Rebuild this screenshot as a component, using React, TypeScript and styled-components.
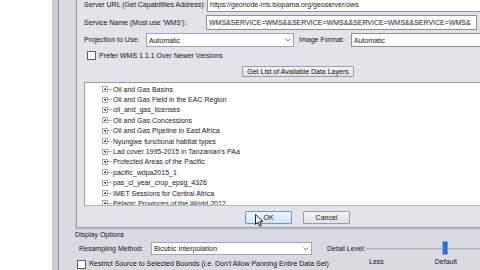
import React from "react";
import styled, { createGlobalStyle } from "styled-components";

const Global = createGlobalStyle`
  html, body { margin: 0; padding: 0; background: #ffffff; }
  body { font-family: "Liberation Sans", Arial, sans-serif; font-size: 7px; color: #151515; }
  * { box-sizing: border-box; }
`;

const Screen = styled.div`
  width: 480px;
  height: 270px;
  overflow: hidden;
  display: flex;
  background: #ffffff;
`;

const SidePane = styled.div`
  width: 53px;
  flex: none;
  background: #ffffff;
  border-right: 1px solid #cfcfd4;
`;

const WindowEdge = styled.div`
  width: 6px;
  flex: none;
  background: #cdcdd6;
  border-right: 1px solid #8c8c98;
`;

const OuterDialog = styled.div`
  flex: none;
  width: 440px;
  display: flex;
  flex-direction: column;
  background: #dadae2;
`;

const WmsWindow = styled.div`
  margin-top: -4px;
  margin-left: 17px;
  width: 420px;
  height: 232px;
  flex: none;
  display: flex;
  flex-direction: column;
  padding: 1px 0 3px 7px;
  background: #e3e3ea;
  border-left: 1px solid #9a9aa6;
  border-bottom: 1px solid #9a9aa6;
  box-shadow: 0 1px 2px rgba(60, 60, 80, 0.25);
`;

const Row = styled.div<{ $h: number; $mt?: number }>`
  display: flex;
  align-items: center;
  height: ${(p) => p.$h}px;
  margin-top: ${(p) => p.$mt ?? 0}px;
  flex: none;
`;

const Label = styled.span<{ $w?: number; $ml?: number }>`
  flex: none;
  white-space: nowrap;
  ${(p) => (p.$w ? `width: ${p.$w}px;` : "")}
  margin-left: ${(p) => p.$ml ?? 0}px;
  line-height: 8px;
`;

const TextBox = styled.div<{ $w?: number; $mr?: number }>`
  height: 100%;
  ${(p) => (p.$w ? `width: ${p.$w}px; flex: none;` : "flex: 1;")}
  margin-right: ${(p) => p.$mr ?? 0}px;
  background: #ffffff;
  border: 1px solid #8f8f98;
  padding: 0 2px;
  display: flex;
  align-items: center;
  white-space: nowrap;
  overflow: hidden;
  color: #1a1a1a;
`;

const Combo = styled.div<{ $w: number }>`
  width: ${(p) => p.$w}px;
  flex: none;
  height: 100%;
  background: #ffffff;
  border: 1px solid #a4a4ae;
  display: flex;
  align-items: center;
  padding-left: 2px;
  white-space: nowrap;
`;

const ComboText = styled.span`
  flex: 1;
`;

const ComboArrow = styled.span`
  width: 11px;
  height: 100%;
  display: flex;
  align-items: center;
  justify-content: center;
`;

const CheckBox = styled.span<{ $ml?: number }>`
  width: 9px;
  height: 9px;
  flex: none;
  margin-left: ${(p) => p.$ml ?? 0}px;
  margin-right: 3px;
  background: #ffffff;
  border: 1px solid #5c5c66;
`;

const Button = styled.div<{ $w: number; $ml?: number; $primary?: boolean }>`
  position: relative;
  width: ${(p) => p.$w}px;
  height: 100%;
  flex: none;
  margin-left: ${(p) => p.$ml ?? 0}px;
  display: flex;
  align-items: center;
  justify-content: center;
  white-space: nowrap;
  border: 1px solid ${(p) => (p.$primary ? "#6f94c8" : "#9c9ca6")};
  border-radius: 1px;
  background: ${(p) =>
    p.$primary
      ? "linear-gradient(#eef4fc, #d6e5f7)"
      : "linear-gradient(#f4f4f6, #e0e0e6)"};
`;

const TreeList = styled.div`
  height: 124px;
  flex: none;
  margin-top: 5px;
  background: #ffffff;
  border-top: 1px solid #9a9aa4;
  border-left: 1px solid #9a9aa4;
  border-bottom: 1px solid #b4b4bc;
  padding-top: 1px;
  overflow: hidden;
  position: relative;
`;

const TreeItem = styled.div`
  height: 10.4px;
  display: flex;
  align-items: center;
  padding-left: 17px;
  white-space: nowrap;
  color: #1a1a1a;
`;

const Expander = styled.span`
  width: 6px;
  height: 6px;
  flex: none;
  border: 1px solid #a9a9b0;
  background: #ffffff;
  position: relative;
  &::before {
    content: "";
    position: absolute;
    left: 1px;
    top: 1.5px;
    width: 2px;
    height: 1px;
    background: #333;
  }
  &::after {
    content: "";
    position: absolute;
    left: 1.5px;
    top: 1px;
    width: 1px;
    height: 2px;
    background: #333;
  }
`;

const Connector = styled.span`
  width: 4px;
  flex: none;
  margin: 0 1px 0 0;
  border-top: 1px dotted #9a9aa0;
`;

const Footer = styled(Row)`
  margin-top: 5px;
`;

const DisplaySection = styled.div`
  display: flex;
  flex-direction: column;
  padding-left: 16px;
`;

const SectionTitle = styled.div`
  margin-top: 3px;
  height: 8px;
  line-height: 8px;
  white-space: nowrap;
`;

const DisplayBody = styled.div`
  display: flex;
  margin-top: 3px;
`;

const LeftColumn = styled.div`
  width: 252px;
  flex: none;
  display: flex;
  flex-direction: column;
`;

const DetailColumn = styled.div`
  display: flex;
  align-items: flex-start;
`;

const DetailLabel = styled.span`
  height: 13px;
  display: flex;
  align-items: center;
  white-space: nowrap;
  width: 39px;
  flex: none;
`;

const SliderBlock = styled.div`
  width: 120px;
  flex: none;
  display: flex;
  flex-direction: column;
`;

const SliderTrackRow = styled.div`
  height: 15px;
  margin-top: -1px;
  position: relative;
  display: flex;
  align-items: center;
`;

const Track = styled.div`
  flex: 1;
  height: 2px;
  background: #c8c8d0;
  border-top: 1px solid #b0b0b8;
`;

const Thumb = styled.div`
  position: absolute;
  left: 76px;
  top: 0;
  width: 6px;
  height: 14px;
  border-radius: 1px;
  background: linear-gradient(90deg, #3d7fd4, #1f5fbf);
  border: 1px solid #6fa2e0;
`;

const TickLabels = styled.div`
  display: flex;
  height: 10px;
  align-items: center;
  padding-left: 3px;
`;

const Tick = styled.span<{ $ml?: number }>`
  margin-left: ${(p) => p.$ml ?? 0}px;
  white-space: nowrap;
`;

const Cursor = styled.svg`
  position: absolute;
  left: 9px;
  top: 2px;
`;

const Chevron = () => (
  <svg width="6" height="4" viewBox="0 0 6 4">
    <path d="M0.5 0.5 L3 3 L5.5 0.5" fill="none" stroke="#7a7a84" strokeWidth="1" />
  </svg>
);

const layers = [
  "Oil and Gas Basins",
  "Oil and Gas Field in the EAC Region",
  "oil_and_gas_licenses",
  "Oil and Gas Concessions",
  "Oil and Gas Pipeline in East Africa",
  "Nyungwe functional habitat types",
  "Lad cover 1995-2015 in Tanzanian's PAa",
  "Protected Areas of the Pacific",
  "pacific_wdpa2015_1",
  "pas_ci_year_crop_epsg_4326",
  "IMET Sessions for Central Africa",
  "Pelagic Provinces of the World 2012",
];

export default function App() {
  return (
    <>
      <Global />
      <Screen>
        <SidePane />
        <WindowEdge />
        <OuterDialog>
          <WmsWindow>
            <Row $h={15}>
              <Label $w={123}>Server URL (Get Capabilities Address):</Label>
              <TextBox>https://geonode-rris.biopama.org/geoserver/ows</TextBox>
            </Row>
            <Row $h={15} $mt={3}>
              <Label $w={122}>Service Name (Most use 'WMS'):</Label>
              <TextBox $mr={19}>WMS&amp;SERVICE=WMS&amp;&amp;SERVICE=WMS&amp;&amp;SERVICE=WMS&amp;&amp;SERVICE=WMS&amp;</TextBox>
            </Row>
            <Row $h={14} $mt={3}>
              <Label $w={62}>Projection to Use:</Label>
              <Combo $w={148}>
                <ComboText>Automatic</ComboText>
                <ComboArrow>
                  <Chevron />
                </ComboArrow>
              </Combo>
              <Label $w={52} $ml={5}>Image Format:</Label>
              <TextBox>Automatic</TextBox>
            </Row>
            <Row $h={9} $mt={4}>
              <CheckBox $ml={3} />
              <Label>Prefer WMS 1.1.1 Over Newer Versions</Label>
            </Row>
            <Row $h={11} $mt={6}>
              <Button $w={112} $ml={158}>Get List of Available Data Layers</Button>
            </Row>
            <TreeList>
              {layers.map((l) => (
                <TreeItem key={l}>
                  <Expander />
                  <Connector />
                  {l}
                </TreeItem>
              ))}
            </TreeList>
            <Footer $h={13}>
              <Button $w={47} $ml={161} $primary>
                OK
                <Cursor width="9" height="13" viewBox="0 0 9 13">
                  <path
                    d="M0.5 0.5 L0.5 10.5 L3 8.2 L4.8 12.2 L6.4 11.5 L4.7 7.6 L8 7.6 Z"
                    fill="#ffffff"
                    stroke="#111111"
                    strokeWidth="0.9"
                    strokeLinejoin="round"
                  />
                </Cursor>
              </Button>
              <Button $w={47} $ml={11}>Cancel</Button>
            </Footer>
          </WmsWindow>
          <DisplaySection>
            <SectionTitle>Display Options</SectionTitle>
            <DisplayBody>
              <LeftColumn>
                <Row $h={13}>
                  <Label $w={72} $ml={4}>Resampling Method:</Label>
                  <Combo $w={161}>
                    <ComboText>Bicubic Interpolation</ComboText>
                    <ComboArrow>
                      <Chevron />
                    </ComboArrow>
                  </Combo>
                </Row>
                <Row $h={12} $mt={3}>
                  <CheckBox $ml={2} />
                  <Label>Restrict Source to Selected Bounds (i.e. Don't Allow Panning Entire Data Set)</Label>
                </Row>
              </LeftColumn>
              <DetailColumn>
                <DetailLabel>Detail Level:</DetailLabel>
                <SliderBlock>
                  <SliderTrackRow>
                    <Track />
                    <Thumb />
                  </SliderTrackRow>
                  <TickLabels>
                    <Tick>Less</Tick>
                    <Tick $ml={51}>Default</Tick>
                  </TickLabels>
                </SliderBlock>
              </DetailColumn>
            </DisplayBody>
          </DisplaySection>
        </OuterDialog>
      </Screen>
    </>
  );
}
